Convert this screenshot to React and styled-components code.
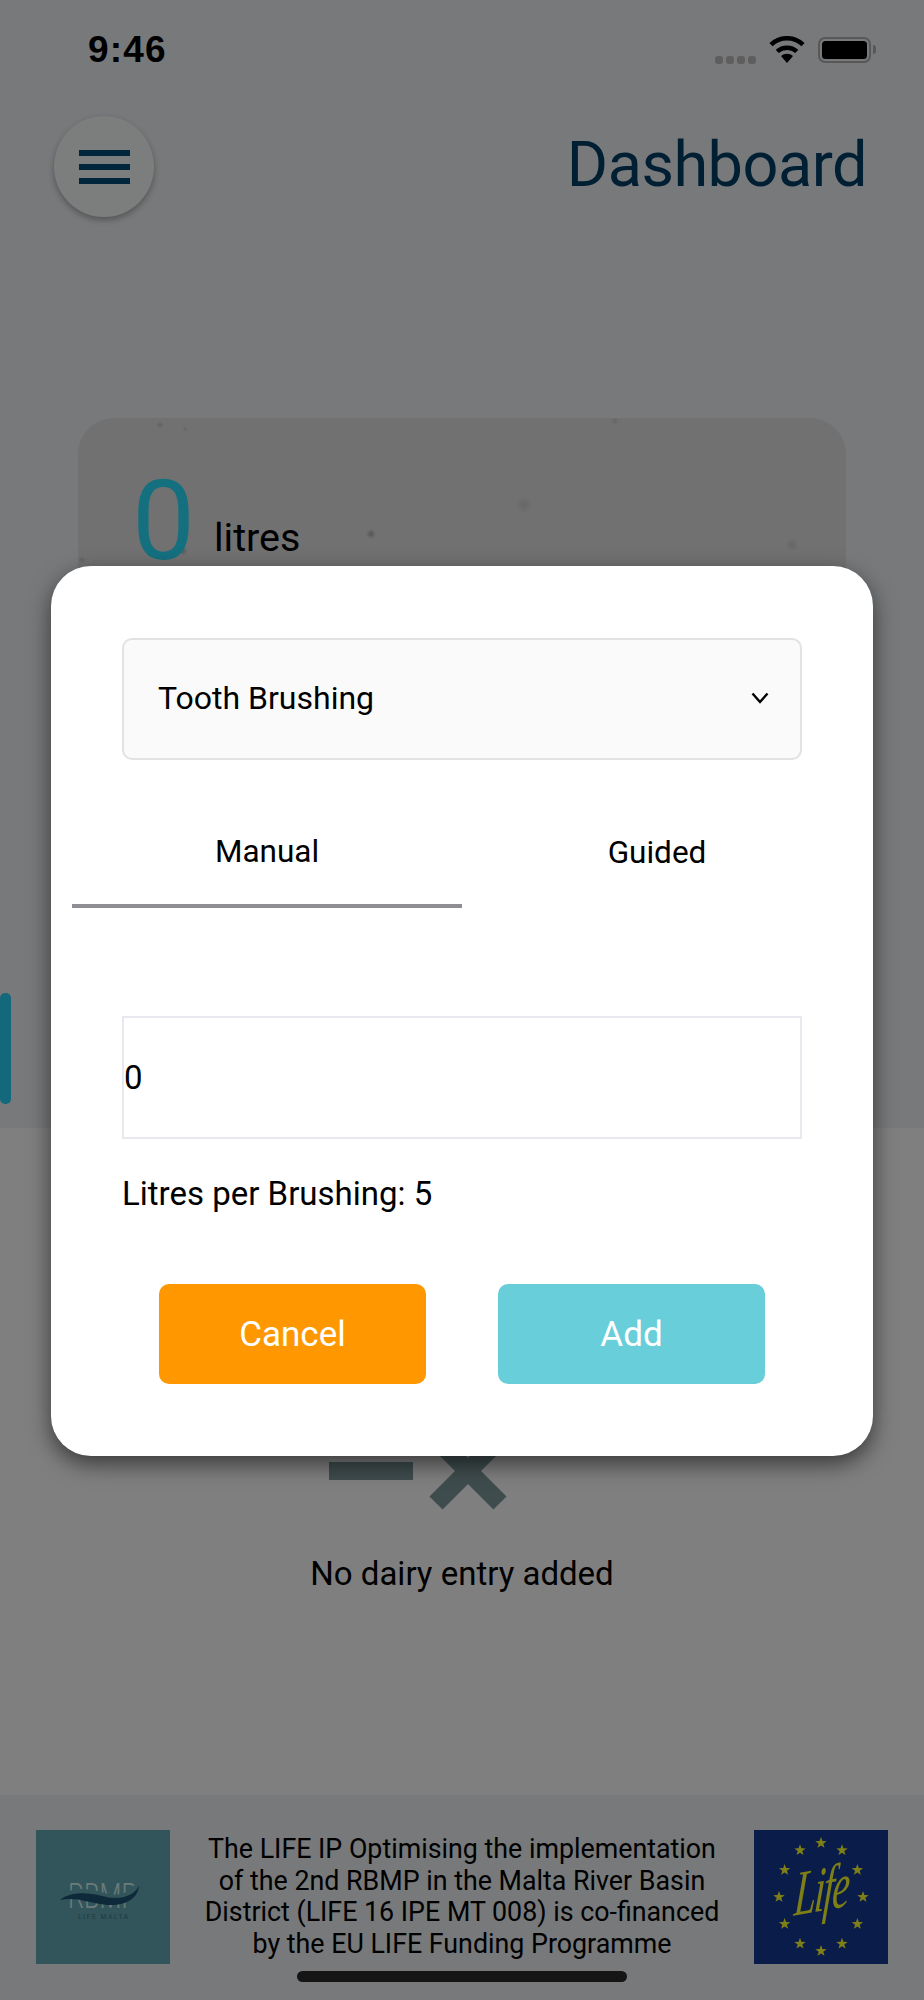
import React from "react";
import styled, { createGlobalStyle } from "styled-components";

const Global = createGlobalStyle`
  html, body { margin: 0; padding: 0; background: #fff; }
  * { box-sizing: border-box; }
  body { font-family: Roboto, "Liberation Sans", sans-serif; color: #000; }
`;

const Phone = styled.div`
  position: relative;
  width: 924px;
  height: 2000px;
  overflow: hidden;
  display: flex;
  flex-direction: column;
`;

const TopSection = styled.section`
  background: #eef2f6;
  height: 1128px;
  display: flex;
  flex-direction: column;
`;

const StatusBar = styled.div`
  height: 100px;
  display: flex;
  align-items: center;
  justify-content: space-between;
  padding: 0 53px 0 88px;
`;

const Time = styled.span`
  font-family: "Liberation Sans", sans-serif;
  font-weight: 700;
  font-size: 37px;
  letter-spacing: 1.2px;
`;

const StatusIcons = styled.div`
  display: flex;
  align-items: center;
  gap: 13px;
`;

const SignalDots = styled.div`
  display: flex;
  gap: 3px;
  align-self: flex-end;
  i {
    display: block;
    width: 8px;
    height: 8px;
    border-radius: 3px;
    background: #bcbcbe;
  }
`;

const Battery = styled.div`
  position: relative;
  width: 53px;
  height: 26px;
  border: 2.5px solid #b0b0b2;
  border-radius: 7px;
  padding: 2px;
  &::before {
    content: "";
    display: block;
    height: 100%;
    background: #000;
    border-radius: 3.5px;
  }
  &::after {
    content: "";
    position: absolute;
    right: -7px;
    top: 6px;
    width: 3px;
    height: 9px;
    background: #b0b0b2;
    border-radius: 0 3px 3px 0;
  }
`;

const Header = styled.header`
  margin-top: 16px;
  padding: 0 57px 0 54px;
  display: flex;
  align-items: center;
  justify-content: space-between;
`;

const MenuButton = styled.button`
  width: 100px;
  height: 101px;
  border: 0;
  border-radius: 50%;
  background: #f9fafb;
  box-shadow: 0 3px 6px rgba(0, 0, 0, 0.3);
  display: flex;
  flex-direction: column;
  justify-content: center;
  align-items: center;
  gap: 8px;
  padding: 0;
  i {
    display: block;
    width: 51px;
    height: 6px;
    background: #004c78;
  }
`;

const Title = styled.h1`
  margin: 0 0 4px;
  font-size: 63px;
  font-weight: 400;
  line-height: 1;
  letter-spacing: -0.5px;
  color: #033f66;
`;

const UsageCard = styled.div`
  margin: 201px 78px 0;
  height: 560px;
  border-radius: 36px;
  background-color: #e2e3e4;
  background-image:
    radial-gradient(circle 4px at 82px 7px, rgba(0, 0, 0, 0.14), transparent),
    radial-gradient(circle 3px at 107px 11px, rgba(0, 0, 0, 0.1), transparent),
    radial-gradient(circle 5px at 293px 116px, rgba(0, 0, 0, 0.26), transparent),
    radial-gradient(circle 9px at 446px 87px, rgba(0, 0, 0, 0.09), transparent),
    radial-gradient(circle 7px at 714px 127px, rgba(0, 0, 0, 0.1), transparent),
    radial-gradient(circle 5px at 105px 133px, rgba(0, 0, 0, 0.2), transparent),
    radial-gradient(circle 4px at 4px 142px, rgba(0, 0, 0, 0.14), transparent),
    radial-gradient(circle 4px at 537px 3px, rgba(0, 0, 0, 0.1), transparent);
  padding: 47px 0 0 54px;
  display: flex;
  align-items: flex-start;
  gap: 19px;
`;

const Amount = styled.span`
  font-size: 112px;
  font-weight: 400;
  line-height: 1;
  color: #28e0ff;
`;

const Unit = styled.span`
  margin-top: 53px;
  font-size: 39.5px;
  font-weight: 400;
  line-height: 1;
`;

const SideTab = styled.div`
  width: 11px;
  height: 111px;
  margin-top: 15px;
  background: #28d0f6;
  border-radius: 5px;
`;

const EmptySection = styled.section`
  background: #fff;
  height: 667px;
  padding-top: 242px;
  display: flex;
  flex-direction: column;
  align-items: center;
`;

const EmptyIcon = styled.svg`
  display: block;
  width: 266px;
  height: 140px;
  color: #7e989a;
`;

const EmptyText = styled.p`
  margin: 46px 0 0;
  font-size: 33px;
  line-height: 36px;
`;

const Footer = styled.footer`
  flex: 1;
  background: #eef2f6;
  padding: 35px 36px 0;
  display: flex;
  justify-content: space-between;
  align-items: flex-start;
`;

const FooterText = styled.p`
  margin: 4px 0 0;
  text-align: center;
  font-size: 26.8px;
  line-height: 31.5px;
`;

const Logo = styled.svg`
  display: block;
  width: 134px;
  height: 134px;
  flex: none;
`;

const HomeIndicator = styled.div`
  position: absolute;
  left: 297px;
  top: 1971px;
  width: 330px;
  height: 11px;
  border-radius: 6px;
  background: #2a2a2a;
`;

const Backdrop = styled.div`
  position: absolute;
  inset: 0;
  background: rgba(0, 0, 0, 0.5);
`;

const Modal = styled.div`
  position: absolute;
  left: 51px;
  top: 566px;
  width: 822px;
  height: 890px;
  background: #fff;
  border-radius: 40px;
  box-shadow: 0 8px 22px rgba(0, 0, 0, 0.55);
  padding: 72px 71px 0;
  display: flex;
  flex-direction: column;
`;

const SelectBox = styled.div`
  height: 122px;
  border: 2px solid #e2e2e2;
  border-radius: 10px;
  background: #fafafa;
  padding: 0 31px 2px 34px;
  display: flex;
  align-items: center;
  justify-content: space-between;
  font-size: 32px;
`;

const Tabs = styled.div`
  margin: 63px -50px 0;
  display: flex;
`;

const Tab = styled.div`
  flex: 1;
  height: 85px;
  padding-top: ${(p) => (p.$active ? "11px" : "12px")};
  text-align: center;
  font-size: 31.5px;
  line-height: 36px;
  border-bottom: 4px solid ${(p) => (p.$active ? "#8e8e93" : "transparent")};
`;

const NumberField = styled.div`
  margin-top: 108px;
  height: 123px;
  border: 2.5px solid #e8e8ee;
  display: flex;
  align-items: center;
  font-size: 33px;
`;

const Hint = styled.p`
  margin: 37px 0 0;
  font-size: 33px;
  line-height: 36px;
`;

const Actions = styled.div`
  margin-top: 72px;
  padding: 0 37px;
  display: flex;
  justify-content: space-between;
`;

const ActionButton = styled.button`
  width: 267px;
  height: 100px;
  border: 0;
  border-radius: 10px;
  background: ${(p) => p.$bg};
  color: #fff;
  font-family: Roboto, sans-serif;
  font-size: 35px;
  font-weight: 400;
`;

const STARS = Array.from({ length: 12 }, (_, i) => {
  const a = (i * Math.PI) / 6;
  return [67 + 42 * Math.sin(a), 67 - 54 * Math.cos(a)];
});
const starPoints = (cx, cy, r) =>
  Array.from({ length: 10 }, (_, i) => {
    const a = (i * Math.PI) / 5;
    const d = i % 2 ? r * 0.4 : r;
    return `${(cx + d * Math.sin(a)).toFixed(2)},${(cy - d * Math.cos(a)).toFixed(2)}`;
  }).join(" ");

export default function App() {
  return (
    <>
      <Global />
      <Phone>
        <TopSection>
          <StatusBar>
            <Time>9:46</Time>
            <StatusIcons>
              <SignalDots>
                <i /><i /><i /><i />
              </SignalDots>
              <svg width="36" height="28" viewBox="0 0 36 28">
                <path d="M18 27l-6-7a9 9 0 0 1 12 0z" fill="#000" />
                <path d="M8.2 15.4a14.8 14.8 0 0 1 19.6 0" fill="none" stroke="#000" strokeWidth="4.6" />
                <path d="M2 8.6a23.4 23.4 0 0 1 32 0" fill="none" stroke="#000" strokeWidth="4.6" />
              </svg>
              <Battery />
            </StatusIcons>
          </StatusBar>
          <Header>
            <MenuButton aria-label="Menu">
              <i /><i /><i />
            </MenuButton>
            <Title>Dashboard</Title>
          </Header>
          <UsageCard>
            <Amount>0</Amount>
            <Unit>litres</Unit>
          </UsageCard>
          <SideTab />
        </TopSection>

        <EmptySection>
          <EmptyIcon viewBox="0 0 266 140">
            <rect x="0" y="92" width="84" height="18" fill="currentColor" />
            <path d="M107 70 L171 134 M171 70 L107 134" transform="translate(0,-1)" fill="none" stroke="currentColor" strokeWidth="18.5" />
          </EmptyIcon>
          <EmptyText>No dairy entry added</EmptyText>
        </EmptySection>

        <Footer>
          <Logo viewBox="0 0 134 134">
            <rect width="134" height="134" fill="#62aab4" />
            <text x="32" y="78" textLength="69" lengthAdjust="spacingAndGlyphs" fontFamily="Roboto, sans-serif" fontWeight="300" fontSize="35" fill="#dcf4f4">RBMP</text>
            <path d="M24 70 C34 62 50 62 66 67 C82 72 96 68 103 56" fill="none" stroke="#62aab4" strokeWidth="9" />
            <path d="M24 70 C34 62 50 62 66 66 C82 70 96 68 103 56 C102 68 90 76 72 75 C56 74 40 66 24 70 Z" fill="#1c5474" />
            <text x="42" y="89" textLength="50" fontFamily="Roboto, sans-serif" fontSize="6.5" fill="#3c7480">LIFE MALTA</text>
          </Logo>
          <FooterText>
            The LIFE IP Optimising the implementation
            <br />
            of the 2nd RBMP in the Malta River Basin
            <br />
            District (LIFE 16 IPE MT 008) is co-financed
            <br />
            by the EU LIFE Funding Programme
          </FooterText>
          <Logo viewBox="0 0 134 134">
            <rect width="134" height="134" fill="#143a94" />
            {STARS.map(([x, y], i) => (
              <polygon key={i} points={starPoints(x, y, 6)} fill="#ffff30" />
            ))}
            <text
              textAnchor="middle"
              fontFamily="Liberation Serif, serif"
              fontStyle="italic"
              fontSize="42"
              letterSpacing="-2"
              transform="translate(66 81) rotate(-10) skewX(-14) scale(0.95 1.5)"
              fill="#ffff30"
            >
              Life
            </text>
          </Logo>
        </Footer>

        <HomeIndicator />

        <Backdrop />

        <Modal>
          <SelectBox>
            Tooth Brushing
            <svg width="18" height="12" viewBox="0 0 18 12">
              <path d="M1.5 1.5 L9 10 L16.5 1.5" fill="none" stroke="#000" strokeWidth="2.4" />
            </svg>
          </SelectBox>
          <Tabs>
            <Tab $active>Manual</Tab>
            <Tab>Guided</Tab>
          </Tabs>
          <NumberField>0</NumberField>
          <Hint>Litres per Brushing: 5</Hint>
          <Actions>
            <ActionButton $bg="#ff9800">Cancel</ActionButton>
            <ActionButton $bg="#68ceda">Add</ActionButton>
          </Actions>
        </Modal>
      </Phone>
    </>
  );
}
